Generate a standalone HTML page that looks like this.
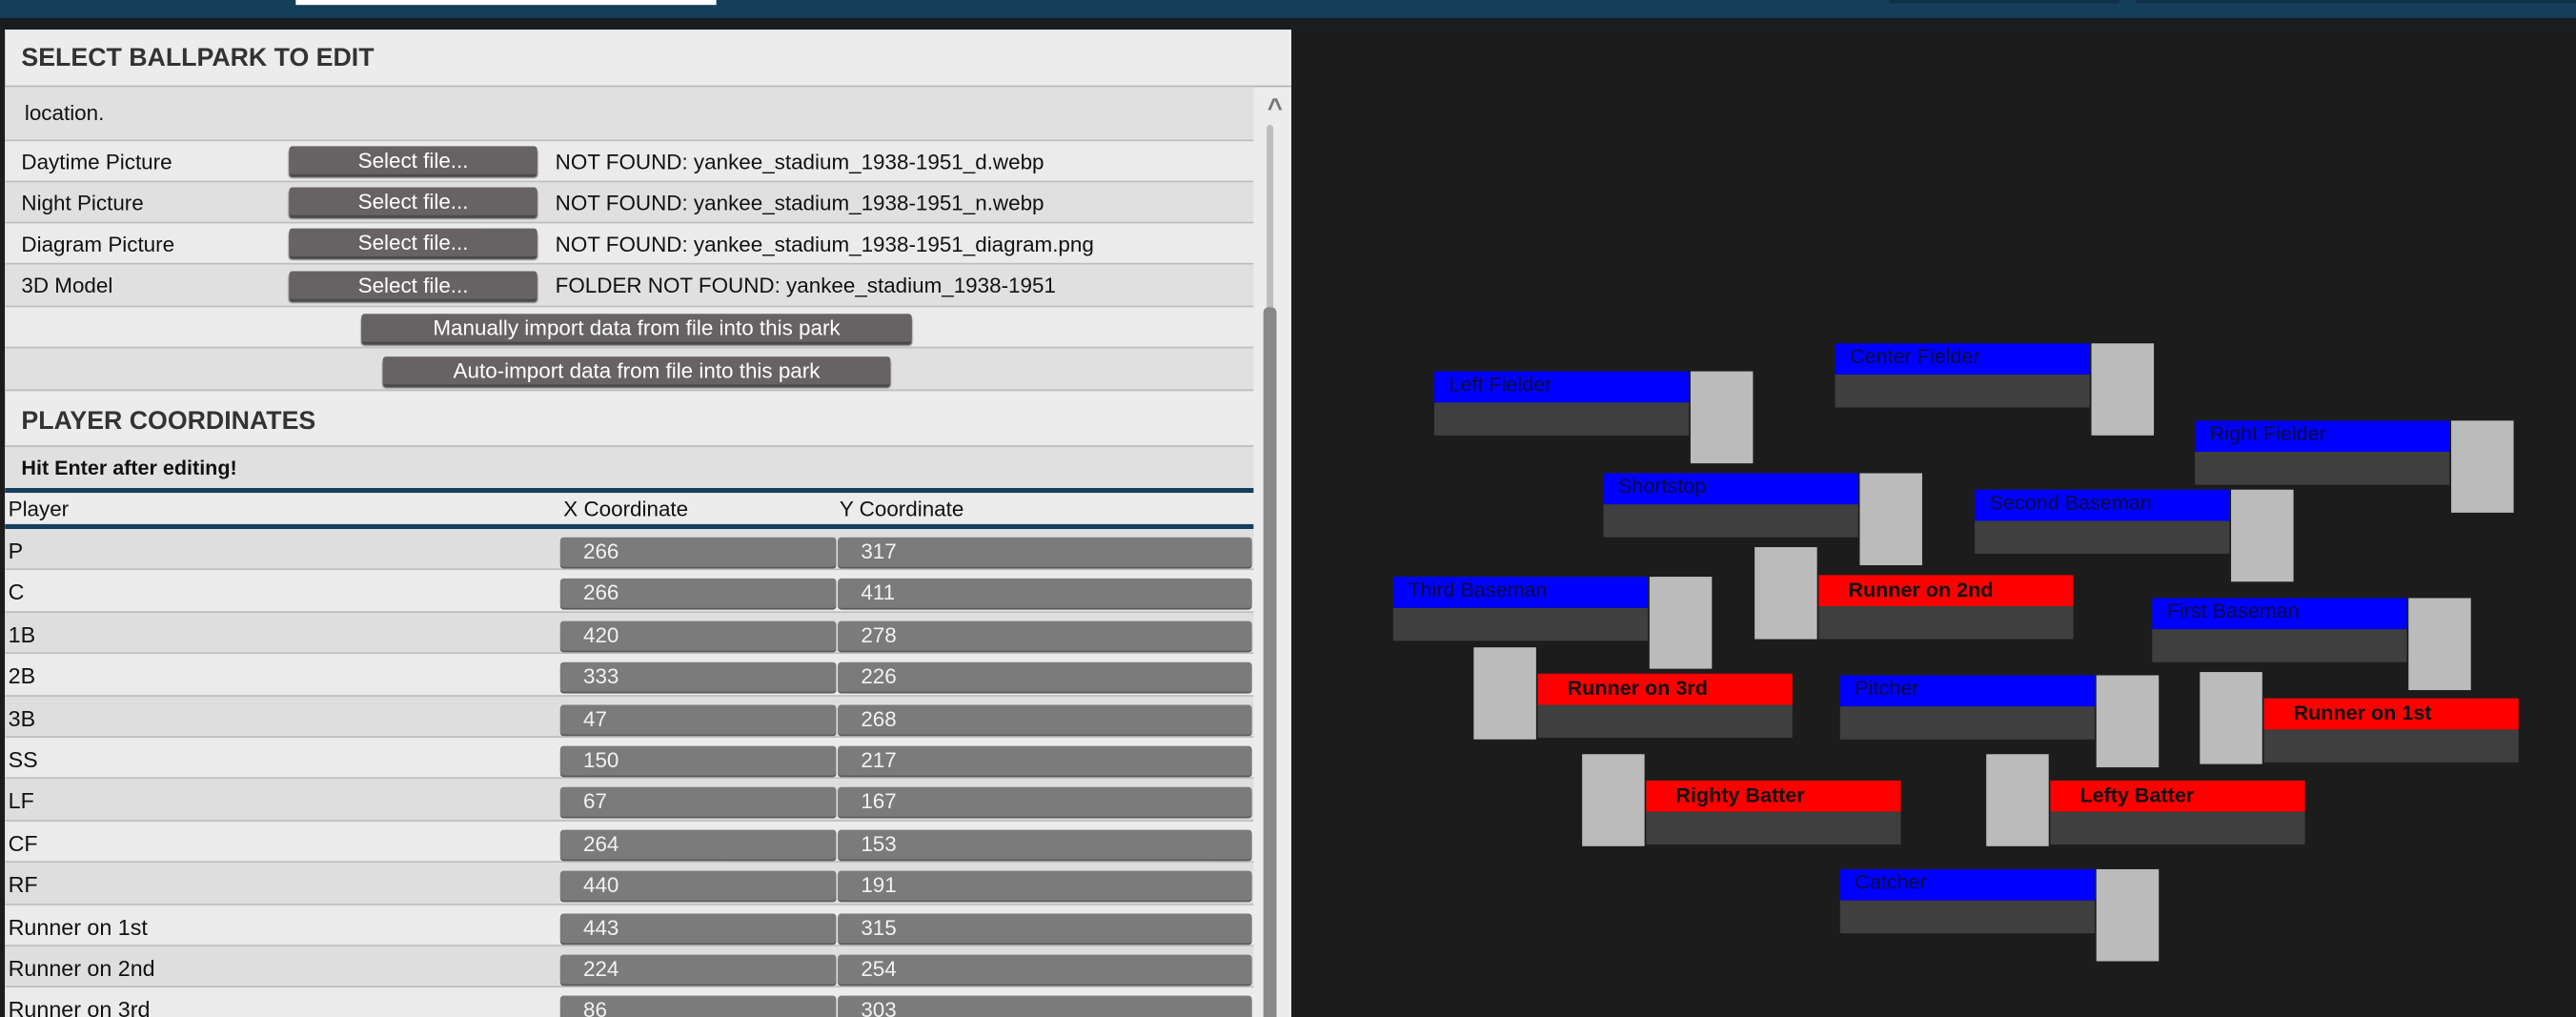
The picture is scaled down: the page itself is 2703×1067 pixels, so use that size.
<!DOCTYPE html>
<html><head><meta charset="utf-8"><style>
html,body{margin:0;padding:0;width:2703px;height:1066px;overflow:hidden;background:#1c1c1c;}
#s{position:absolute;left:0;top:0;width:1568px;height:619px;transform:scale(1.7239);transform-origin:0 0;font-family:"Liberation Sans",sans-serif;}
.a{position:absolute;}
.top{left:0;top:0;width:1568px;height:11px;background:#143e5a;}
.strip{left:0;top:11px;width:1568px;height:7px;background:#1a1d20;}
.panel{left:3px;top:18px;width:783px;height:601px;background:#ececec;overflow:hidden;}
.h{font-weight:bold;font-size:15.5px;color:#333;}
.row{position:absolute;left:0;width:760px;border-bottom:1px solid #bdbdbd;font-size:13px;color:#111;}
.btn{position:absolute;background:#676365;color:#fff;border-radius:2px;box-shadow:0 2px 1px #4a4a4a;text-align:center;font-size:13px;}
.lbl{position:absolute;left:10px;}
.inp{position:absolute;height:18px;background:#7b7b7b;border-radius:2px;box-shadow:0 1px 0 #5a5a5a;color:#f2f2f2;font-size:13px;line-height:18px;padding-left:14px;box-sizing:border-box;}
.b{position:absolute;width:155px;height:19px;background:#0000ff;color:#0a0a40;font-size:12.5px;line-height:17px;padding-left:9px;box-sizing:border-box;}
.r{position:absolute;width:155px;height:19px;background:#ff0000;color:#111;font-weight:bold;font-size:12.5px;line-height:18px;padding-left:18px;box-sizing:border-box;}
.g{position:absolute;width:155px;height:20px;background:#3f3f3f;}
.sq{position:absolute;width:38px;height:56px;background:#bbbbbb;}
</style></head><body><div id="s">
<div class="a top"></div>
<div class="a" style="left:180px;top:0;width:256px;height:3px;background:#fff"></div>
<div class="a" style="left:1150px;top:0;width:140px;height:2px;background:#0f2f48"></div>
<div class="a" style="left:1300px;top:0;width:268px;height:2px;background:#0f2f48"></div>
<div class="a strip"></div>
<div class="a panel">
 <div class="a h" style="left:10px;top:9px">SELECT BALLPARK TO EDIT</div>
 <div class="a" style="left:0;top:34px;width:783px;height:1px;background:#b5b5b5"></div>
 <div class="row" style="top:35px;height:32px;background:#e0e0e0"><span class="lbl" style="left:12px;top:8px">location.</span></div>
 <div class="row" style="top:68px;height:24px;background:#ebebeb"><span class="lbl" style="top:5px">Daytime Picture</span><div class="btn" style="left:173px;top:3px;width:151px;height:17px;line-height:17px">Select file...</div><span class="lbl" style="left:335px;top:5px">NOT FOUND: yankee_stadium_1938-1951_d.webp</span></div>
 <div class="row" style="top:93px;height:24px;background:#e0e0e0"><span class="lbl" style="top:5px">Night Picture</span><div class="btn" style="left:173px;top:3px;width:151px;height:17px;line-height:17px">Select file...</div><span class="lbl" style="left:335px;top:5px">NOT FOUND: yankee_stadium_1938-1951_n.webp</span></div>
 <div class="row" style="top:118px;height:24px;background:#ebebeb"><span class="lbl" style="top:5px">Diagram Picture</span><div class="btn" style="left:173px;top:3px;width:151px;height:17px;line-height:17px">Select file...</div><span class="lbl" style="left:335px;top:5px">NOT FOUND: yankee_stadium_1938-1951_diagram.png</span></div>
 <div class="row" style="top:143px;height:25px;background:#e0e0e0"><span class="lbl" style="top:5px">3D Model</span><div class="btn" style="left:173px;top:4px;width:151px;height:17px;line-height:17px">Select file...</div><span class="lbl" style="left:335px;top:5px">FOLDER NOT FOUND: yankee_stadium_1938-1951</span></div>
 <div class="row" style="top:169px;height:24px;background:#ebebeb"><div class="btn" style="left:217px;top:4px;width:335px;height:17px;line-height:17px">Manually import data from file into this park</div></div>
 <div class="row" style="top:194px;height:25px;background:#e0e0e0"><div class="btn" style="left:230px;top:5px;width:309px;height:17px;line-height:17px">Auto-import data from file into this park</div></div>
 <div class="a h" style="left:10px;top:230px">PLAYER COORDINATES</div>
 <div class="row" style="top:253px;height:25px;background:#e0e0e0;border-top:1px solid #bdbdbd"><span class="lbl" style="top:6px;font-weight:bold;font-size:12.5px">Hit Enter after editing!</span></div>
 <div class="a" style="left:0;top:279px;width:760px;height:3px;background:#17405c"></div>
 <div class="row" style="top:282px;height:19px;background:#ececec;border-bottom:3px solid #17405c"><span class="lbl" style="left:2px;top:2px">Player</span><span class="lbl" style="left:340px;top:2px">X Coordinate</span><span class="lbl" style="left:508px;top:2px">Y Coordinate</span></div>
 <div id="rows"></div>
 <div class="a" style="left:763px;top:40px;width:20px;height:14px;color:#777;font-size:16px;font-weight:bold;text-align:center">&#94;</div>
 <div class="a" style="left:768px;top:58px;width:4px;height:130px;background:#bdbdbd;border-radius:2px"></div>
 <div class="a" style="left:766px;top:169px;width:8px;height:440px;background:#888;border-radius:3px"></div>
</div>
<script>
var d=[["P",266,317],["C",266,411],["1B",420,278],["2B",333,226],["3B",47,268],["SS",150,217],["LF",67,167],["CF",264,153],["RF",440,191],["Runner on 1st",443,315],["Runner on 2nd",224,254],["Runner on 3rd",86,303]];
var h="";for(var i=0;i<d.length;i++){var t=304+i*25.4;h+='<div class="row" style="top:'+t+'px;height:24.4px;background:'+(i%2?'#ebebeb':'#dedede')+'"><span class="lbl" style="left:2px;top:6px;font-size:13.5px">'+d[i][0]+'</span><div class="inp" style="left:338px;top:5px;width:168px">'+d[i][1]+'</div><div class="inp" style="left:507px;top:5px;width:252px">'+d[i][2]+'</div></div>';}
document.getElementById("rows").innerHTML=h;
</script>
<div class="b" style="left:873px;top:226px">Left Fielder</div><div class="g" style="left:873px;top:245px"></div><div class="sq" style="left:1029px;top:226px"></div>
<div class="b" style="left:1117px;top:209px">Center Fielder</div><div class="g" style="left:1117px;top:228px"></div><div class="sq" style="left:1273px;top:209px"></div>
<div class="b" style="left:1336px;top:256px">Right Fielder</div><div class="g" style="left:1336px;top:275px"></div><div class="sq" style="left:1492px;top:256px"></div>
<div class="b" style="left:976px;top:288px">Shortstop</div><div class="g" style="left:976px;top:307px"></div><div class="sq" style="left:1132px;top:288px"></div>
<div class="b" style="left:1202px;top:298px">Second Baseman</div><div class="g" style="left:1202px;top:317px"></div><div class="sq" style="left:1358px;top:298px"></div>
<div class="b" style="left:848px;top:351px">Third Baseman</div><div class="g" style="left:848px;top:370px"></div><div class="sq" style="left:1004px;top:351px"></div>
<div class="b" style="left:1310px;top:364px">First Baseman</div><div class="g" style="left:1310px;top:383px"></div><div class="sq" style="left:1466px;top:364px"></div>
<div class="b" style="left:1120px;top:411px">Pitcher</div><div class="g" style="left:1120px;top:430px"></div><div class="sq" style="left:1276px;top:411px"></div>
<div class="b" style="left:1120px;top:529px">Catcher</div><div class="g" style="left:1120px;top:548px"></div><div class="sq" style="left:1276px;top:529px"></div>
<div class="sq" style="left:1068px;top:333px"></div><div class="r" style="left:1107px;top:350px">Runner on 2nd</div><div class="g" style="left:1107px;top:369px"></div>
<div class="sq" style="left:897px;top:394px"></div><div class="r" style="left:936px;top:410px">Runner on 3rd</div><div class="g" style="left:936px;top:429px"></div>
<div class="sq" style="left:1339px;top:409px"></div><div class="r" style="left:1378px;top:425px">Runner on 1st</div><div class="g" style="left:1378px;top:444px"></div>
<div class="sq" style="left:963px;top:459px"></div><div class="r" style="left:1002px;top:475px">Righty Batter</div><div class="g" style="left:1002px;top:494px"></div>
<div class="sq" style="left:1209px;top:459px"></div><div class="r" style="left:1248px;top:475px">Lefty Batter</div><div class="g" style="left:1248px;top:494px"></div>
</div></body></html>
